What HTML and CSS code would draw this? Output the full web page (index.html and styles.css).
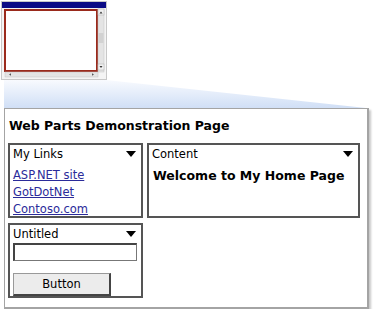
FILE: index.html
```html
<!DOCTYPE html>
<html lang="en">

<head>
    <meta charset="UTF-8">
    <title>Web Parts</title>
    <link rel="stylesheet" href="styles.css">
</head>

<body>
    <!-- thumbnail of the browser window and the zoom fan -->
    <svg class="thumb" width="374" height="108" viewBox="0 0 374 108">
        <defs>
            <linearGradient id="fan" x1="0" y1="0" x2="0" y2="1">
                <stop offset="0" stop-color="#f8fafe" />
                <stop offset="1" stop-color="#d0dff6" />
            </linearGradient>
        </defs>
        <polygon points="4,80 106,80 366,108 4,108" fill="url(#fan)" />
        <rect x="1.5" y="1.5" width="105" height="78" fill="#f4f4f4" stroke="#c8c8c8" />
        <rect x="2" y="2" width="104" height="6" fill="#0b0b86" />
        <rect x="5" y="10" width="92" height="61" fill="#fff" stroke="#9a2a1c" stroke-width="2" />
        <rect x="98" y="9" width="6" height="63" fill="#e4e4e4" stroke="#c4c4c4" stroke-width="0.5" />
        <rect x="98" y="9" width="6" height="6" fill="#f0f0f0" stroke="#b0b0b0" stroke-width="0.5" />
        <polygon points="99.5,13.5 102.5,13.5 101,11.5" fill="#333" />
        <rect x="98" y="64" width="6" height="6" fill="#f0f0f0" stroke="#b0b0b0" stroke-width="0.5" />
        <polygon points="99.5,66 102.5,66 101,68" fill="#333" />
        <rect x="98.5" y="33" width="5" height="10" fill="#d2d2d2" />
        <rect x="5" y="72" width="93" height="5" fill="#e4e4e4" stroke="#c4c4c4" stroke-width="0.5" />
        <polygon points="9,74.5 11,73.3 11,75.7" fill="#555" />
        <polygon points="94,74.5 92,73.3 92,75.7" fill="#555" />
    </svg>

    <div class="frame">
        <h1 class="page_title">Web Parts Demonstration Page</h1>

        <div class="zones">
            <div class="part">
                <div class="part_head">
                    <span>My Links</span>
                    <span class="arrow"></span>
                </div>
                <ul class="links">
                    <li><a href="#">ASP.NET site</a></li>
                    <li><a href="#">GotDotNet</a></li>
                    <li><a href="#">Contoso.com</a></li>
                </ul>
            </div>

            <div class="part">
                <div class="part_head">
                    <span>Content</span>
                    <span class="arrow"></span>
                </div>
                <p class="welcome">Welcome to My Home Page</p>
            </div>

            <div class="part">
                <div class="part_head">
                    <span>Untitled</span>
                    <span class="arrow"></span>
                </div>
                <input type="text" class="field" />
                <input type="button" value="Button" class="btn" />
            </div>
        </div>
    </div>
</body>

</html>
```

FILE: styles.css
```css
body,
div,
p,
h1,
ul,
li,
input {
    margin: 0;
    padding: 0;
    border: 0px;
}

body {
    background: #fff;
    font-family: "DejaVu Sans", Verdana, sans-serif;
    color: #000;
}

.thumb {
    display: block;
}

.frame {
    width: 355px;
    margin-left: 4px;
    padding: 9px 4px 9px 3px;
    border: 2px solid #a4a4a4;
    border-top-width: 1px;
    border-left-width: 1px;
    box-shadow: 2px 2px 2px #c8c8c8;
}

.page_title {
    font-size: 12.5px;
    font-weight: bold;
    line-height: 16px;
    padding-left: 1px;
    margin-bottom: 9px;
}

.zones {
    display: grid;
    grid-template-columns: 135px 213px;
    grid-template-rows: 75px 75px;
    gap: 5px 4px;
}

.part {
    border: 2px solid #555;
    padding: 0 3px;
}

.part_head {
    display: flex;
    justify-content: space-between;
    align-items: center;
    font-size: 11.5px;
    height: 17px;
    margin-top: 0;
}

.arrow {
    width: 0;
    height: 0;
    border-left: 5px solid transparent;
    border-right: 5px solid transparent;
    border-top: 6px solid #000;
    margin-right: 2px;
}

.links {
    list-style: none;
    margin-top: 5px;
}

.links li {
    font-size: 11.5px;
    line-height: 17px;
}

.links a {
    color: #2b2b9a;
}

.welcome {
    font-size: 12.5px;
    font-weight: bold;
    margin-top: 6px;
    padding-left: 1px;
}

.field {
    display: block;
    width: 124px;
    height: 18px;
    margin-top: 1px;
    border: 1px solid #777;
    border-top: 2px solid #444;
    border-left: 2px solid #444;
    box-sizing: border-box;
    background: #fff;
}

.btn {
    display: block;
    width: 98px;
    height: 23px;
    margin-top: 12px;
    box-sizing: border-box;
    border: 1px solid #999;
    border-right: 2px solid #444;
    border-bottom: 2px solid #444;
    background: #ececec;
    font-family: "DejaVu Sans", Verdana, sans-serif;
    font-size: 11.5px;
    color: #000;
}
```
